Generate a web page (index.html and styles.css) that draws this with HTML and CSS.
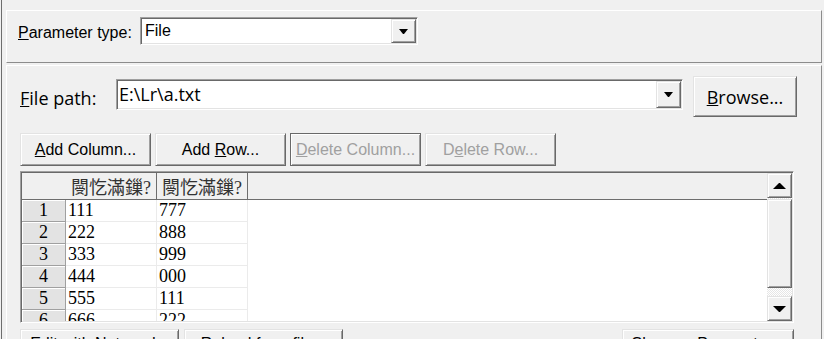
FILE: index.html
```html
<!DOCTYPE html>
<html lang="en">
<head>
  <meta charset="UTF-8" />
  <meta name="viewport" content="width=device-width, initial-scale=1.0"/>
  <title>Parameter Properties</title>
  <link rel="stylesheet" href="styles.css">
</head>
<body>
  <div id="frame">
    <div class="panel top-panel">
      <span class="type-label"><u>P</u>arameter type:</span>
      <div class="combo type-combo">
        <span class="combo-text">File</span>
        <span class="drop-btn raised"><span class="arrow-down"></span></span>
      </div>
    </div>

    <div class="panel main-panel">
      <div class="path-row">
        <span class="path-label"><u>F</u>ile path:</span>
        <div class="combo path-combo">
          <span class="combo-text">E:\Lr\a.txt</span>
          <span class="drop-btn raised"><span class="arrow-down"></span></span>
        </div>
        <button class="btn raised browse-btn"><u>B</u>rowse...</button>
      </div>

      <div class="btn-row">
        <button class="btn raised"><u>A</u>dd Column...</button>
        <button class="btn raised">Add <u>R</u>ow...</button>
        <button class="btn raised disabled default-btn"><u>D</u>elete Column...</button>
        <button class="btn raised disabled">D<u>e</u>lete Row...</button>
      </div>

      <div class="grid">
        <div class="grid-body">
          <table>
            <colgroup>
              <col class="c-head">
              <col class="c-data">
              <col class="c-data">
              <col>
            </colgroup>
            <thead>
              <tr>
                <th class="corner"></th>
                <th>閿忔滿鏁?</th>
                <th>閿忔滿鏁?</th>
                <th class="filler"></th>
              </tr>
            </thead>
            <tbody>
              <tr><td class="rh">1</td><td>111</td><td>777</td><td class="filler"></td></tr>
              <tr><td class="rh">2</td><td>222</td><td>888</td><td class="filler"></td></tr>
              <tr><td class="rh">3</td><td>333</td><td>999</td><td class="filler"></td></tr>
              <tr><td class="rh">4</td><td>444</td><td>000</td><td class="filler"></td></tr>
              <tr><td class="rh">5</td><td>555</td><td>111</td><td class="filler"></td></tr>
              <tr><td class="rh">6</td><td>666</td><td>222</td><td class="filler"></td></tr>
            </tbody>
          </table>
        </div>
        <div class="scrollbar">
          <span class="sb-btn raised"><span class="arrow-up"></span></span>
          <span class="sb-thumb raised"></span>
          <span class="sb-btn raised sb-down"><span class="arrow-down big"></span></span>
        </div>
      </div>

      <div class="btn-row bottom-row">
        <button class="btn raised wide">Edit with Notepad...</button>
        <button class="btn raised wide">Reload from file...</button>
        <button class="btn raised wider">Show as Parameter...</button>
      </div>
    </div>
  </div>
</body>
</html>
```

FILE: styles.css
```css
body {
  margin: 0;
  width: 824px;
  height: 339px;
  overflow: hidden;
  background-color: #f0f0f0;
  color: #000;
  font-family: "Liberation Sans", Arial, sans-serif;
  font-size: 16px;
}

#frame {
  margin-left: 1px;
  border-left: 1px solid #6d6d6d;
  padding: 10px 0 0 4px;
  height: 339px;
  box-sizing: border-box;
  overflow: hidden;
}

u {
  text-decoration-thickness: 1px;
}

.panel {
  width: 816px;
  box-sizing: border-box;
  border: 1px solid;
  border-color: #fff #8c8c8c #8c8c8c #fff;
}

.raised {
  background-color: #f0f0f0;
  border: 1px solid;
  border-color: #e3e3e3 #696969 #696969 #e3e3e3;
  box-shadow: inset 1px 1px 0 #fff, inset -1px -1px 0 #a0a0a0;
  box-sizing: border-box;
}

.combo {
  display: flex;
  background-color: #fff;
  border: 1px solid;
  border-color: #a0a0a0 #fff #fff #a0a0a0;
  box-shadow: inset 1px 1px 0 #696969, inset -1px -1px 0 #e3e3e3;
  padding: 1px;
  box-sizing: border-box;
}

.combo-text {
  flex: 1;
  display: flex;
  align-items: center;
  padding-left: 3px;
  white-space: nowrap;
}

.drop-btn {
  width: 25px;
  display: flex;
  align-items: center;
  justify-content: center;
}

.arrow-down, .arrow-up {
  width: 1px;
  height: 0;
  border-left: 4px solid transparent;
  border-right: 4px solid transparent;
}

.arrow-down {
  border-top: 5px solid #000;
}

.arrow-down.big {
  border-left-width: 6px;
  border-right-width: 6px;
  border-top-width: 6px;
}

.arrow-up {
  border-left-width: 6px;
  border-right-width: 6px;
  border-bottom: 6px solid #000;
}

/* top panel */
.top-panel {
  height: 53px;
  display: flex;
  align-items: flex-start;
  padding: 6px 0 0 11px;
}

.type-label {
  width: 122px;
  margin-top: 7px;
}

.type-combo {
  width: 278px;
  height: 28px;
}

/* main panel */
.main-panel {
  margin-top: 2px;
  height: 290px;
  padding: 10px 0 0 13px;
}

.path-row {
  display: flex;
  align-items: flex-start;
  font-family: "Open Sans", sans-serif;
  font-size: 18px;
}

.path-label {
  width: 96px;
  margin-top: 10px;
}

.path-combo {
  width: 567px;
  height: 31px;
  margin-top: 3px;
}

.path-combo .combo-text {
  padding-left: 1px;
  padding-bottom: 1px;
}

.btn {
  width: 131px;
  height: 33px;
  padding: 0;
  font-family: "Liberation Sans", Arial, sans-serif;
  font-size: 16px;
  color: #000;
  white-space: nowrap;
}

.browse-btn {
  width: 104px;
  height: 41px;
  margin-left: 10px;
  font-family: "Open Sans", sans-serif;
  font-size: 18px;
}

.btn-row {
  display: flex;
  gap: 4px;
  margin-top: 16px;
}

.btn.disabled {
  color: #a0a0a0;
}

.default-btn {
  border-color: #696969;
}

/* grid */
.grid {
  display: flex;
  width: 774px;
  height: 152px;
  margin-top: 5px;
  background-color: #fff;
  border: 1px solid;
  border-color: #a0a0a0 #fff #fff #a0a0a0;
  box-shadow: inset 1px 1px 0 #696969, inset -1px -1px 0 #e3e3e3;
  padding: 1px;
  box-sizing: border-box;
}

.grid-body {
  flex: 1;
  overflow: hidden;
}

table {
  width: 100%;
  border-collapse: separate;
  border-spacing: 0;
  table-layout: fixed;
  font-family: "Liberation Serif", "Noto Sans CJK SC", serif;
  font-size: 18px;
}

.c-head {
  width: 44px;
}

.c-data {
  width: 91px;
}

th {
  height: 25px;
  padding: 0 0 0 5px;
  background-color: #f0f0f0;
  border-bottom: 1px solid #6d6d6d;
  border-right: 1px solid #6d6d6d;
  font-weight: normal;
  text-align: left;
  color: #333;
  white-space: nowrap;
  overflow: hidden;
}

th.corner, th.filler {
  border-right: none;
}

td {
  height: 21px;
  padding: 0 0 0 2px;
  border-right: 1px solid #ebebeb;
  border-bottom: 1px solid #ebebeb;
  line-height: 21px;
  white-space: nowrap;
}

td.rh {
  padding: 0;
  text-align: center;
  background-color: #e3e3e3;
  border-right: 1px solid #a0a0a0;
  border-bottom: 1px solid #a0a0a0;
  box-shadow: inset 1px 1px 0 #fff;
}

td.filler {
  border: none;
}

.scrollbar {
  width: 25px;
  display: flex;
  flex-direction: column;
  background-color: #f4f4f4;
  background-image: repeating-conic-gradient(#fff 0 25%, #e6e6e6 0 50%);
  background-size: 2px 2px;
}

.sb-btn {
  height: 25px;
  display: flex;
  align-items: center;
  justify-content: center;
}

.sb-thumb {
  height: 89px;
  margin-top: 1px;
}

.sb-down {
  margin-top: auto;
}

.bottom-row {
  width: 774px;
  gap: 5px;
  margin-top: 6px;
}

.bottom-row .btn {
  padding-bottom: 3px;
}

.btn.wide {
  width: 159px;
}

.btn.wider {
  width: 172px;
  margin-left: auto;
}
```
